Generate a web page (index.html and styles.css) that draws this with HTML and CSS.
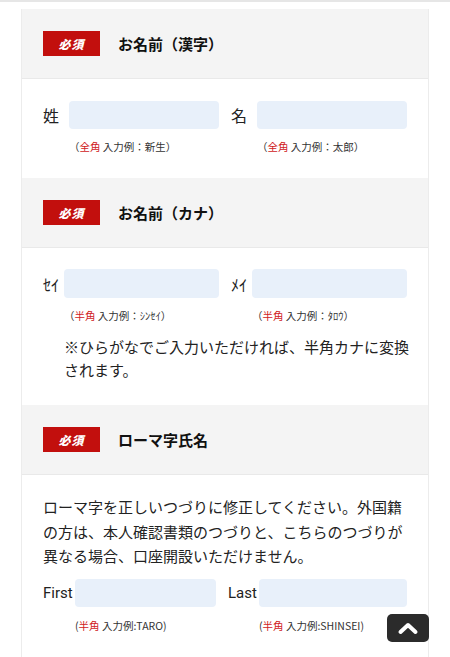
FILE: index.html
```html
<!DOCTYPE html>
<html lang="ja">
<head>
    <meta charset="UTF-8">
    <meta name="viewport" content="width=device-width, initial-scale=1.0">
    <title>お客様情報の入力</title>
    <link rel="stylesheet" href="styles.css">
</head>
<body>
    <div class="form-wrap">

        <!-- お名前（漢字） -->
        <div class="form-section">
            <div class="section-head">
                <span class="required">必須</span>
                <h2 class="section-title">お名前（漢字）</h2>
            </div>
            <div class="section-body body-kanji">
                <div class="name-row">
                    <div class="field">
                        <label class="field-label">姓</label>
                        <input class="field-input" type="text">
                        <p class="hint">（<span class="hint-red">全角</span> 入力例：新生）</p>
                    </div>
                    <div class="field">
                        <label class="field-label">名</label>
                        <input class="field-input" type="text">
                        <p class="hint">（<span class="hint-red">全角</span> 入力例：太郎）</p>
                    </div>
                </div>
            </div>
        </div>

        <!-- お名前（カナ） -->
        <div class="form-section">
            <div class="section-head">
                <span class="required">必須</span>
                <h2 class="section-title">お名前（カナ）</h2>
            </div>
            <div class="section-body body-kana">
                <div class="name-row">
                    <div class="field">
                        <label class="field-label">ｾｲ</label>
                        <input class="field-input" type="text">
                        <p class="hint">（<span class="hint-red">半角</span> 入力例：ｼﾝｾｲ）</p>
                    </div>
                    <div class="field">
                        <label class="field-label">ﾒｲ</label>
                        <input class="field-input" type="text">
                        <p class="hint">（<span class="hint-red">半角</span> 入力例：ﾀﾛｳ）</p>
                    </div>
                </div>
                <p class="kana-note">※ひらがなでご入力いただければ、半角カナに変換されます。</p>
            </div>
        </div>

        <!-- ローマ字氏名 -->
        <div class="form-section">
            <div class="section-head">
                <span class="required">必須</span>
                <h2 class="section-title">ローマ字氏名</h2>
            </div>
            <div class="section-body body-roman">
                <p class="roman-note">ローマ字を正しいつづりに修正してください。外国籍の方は、本人確認書類のつづりと、こちらのつづりが異なる場合、口座開設いただけません。</p>
                <div class="name-row">
                    <div class="field field-first">
                        <label class="field-label">First</label>
                        <input class="field-input" type="text">
                        <p class="hint">(<span class="hint-red">半角</span> 入力例:TARO)</p>
                    </div>
                    <div class="field field-last">
                        <label class="field-label">Last</label>
                        <input class="field-input" type="text">
                        <p class="hint">(<span class="hint-red">半角</span> 入力例:SHINSEI)</p>
                    </div>
                </div>
            </div>
        </div>

    </div>

    <a class="page-top" href="#">
        <svg width="22" height="14" viewBox="0 0 22 14">
            <path d="M3.5 11 L11 4 L18.5 11" fill="none" stroke="#fff" stroke-width="4" stroke-linecap="round" stroke-linejoin="round"/>
        </svg>
    </a>
</body>
</html>
```

FILE: styles.css
```css
* {
    margin: 0;
    padding: 0;
    box-sizing: border-box;
}

body {
    font-family: "Noto Sans CJK JP", "Noto Sans", sans-serif;
    color: #222;
    background: #fff;
    border-top: 2px solid #e6e6e6;
}

.form-wrap {
    padding: 7px 21px 0;
}

.form-section {
    border-left: 1px solid #ececec;
    border-right: 1px solid #ececec;
}

.section-head {
    display: flex;
    align-items: center;
    height: 70px;
    padding-left: 21px;
    background-color: #f4f4f4;
    border-bottom: 1px solid #e9e9e9;
}

.required {
    display: flex;
    align-items: center;
    justify-content: center;
    width: 57px;
    height: 25px;
    background-color: #c20f0d;
    color: #fff;
    font-size: 12px;
    font-weight: 900;
    font-style: italic;
    letter-spacing: 1px;
}

.section-title {
    margin-left: 18px;
    font-size: 15px;
    font-weight: bold;
    color: #111;
}

.section-body {
    padding: 22px 21px 24px;
}

.name-row {
    display: flex;
    gap: 12px;
}

.field {
    flex: 1 1 0;
    min-width: 0;
    display: grid;
    grid-template-columns: 26px minmax(0, 1fr);
    align-items: center;
}

.field-label {
    font-size: 16px;
    color: #222;
}

.field-input {
    width: 100%;
    min-width: 0;
    height: 28px;
    border: none;
    border-radius: 4px;
    background-color: #e8f0fa;
    outline: none;
}

.hint {
    grid-column: 2;
    margin-top: 11px;
    font-size: 10.5px;
    line-height: 14px;
    color: #333;
}

.hint-red {
    color: #d0211c;
}

/* カナ */
.body-kana {
    padding: 21px 21px 24px;
}

.body-kana .field {
    grid-template-columns: 21px minmax(0, 1fr);
}

.body-kana .field-input {
    height: 29px;
}

.kana-note {
    margin: 12px -4px 0 21px;
    font-size: 15px;
    line-height: 23px;
    color: #222;
}

/* ローマ字 */
.body-roman {
    padding-top: 20px;
}

.roman-note {
    font-size: 15px;
    line-height: 24.5px;
    color: #222;
}

.body-roman .name-row {
    margin-top: 10px;
}

.body-roman .hint {
    margin-top: 12px;
}

.body-roman .field-label {
    font-family: Roboto, "Noto Sans", sans-serif;
    font-size: 15px;
}

.field-first {
    flex: 0 0 173px;
    grid-template-columns: 32px minmax(0, 1fr);
}

.field-last {
    grid-template-columns: 31px minmax(0, 1fr);
}

.page-top {
    position: fixed;
    right: 21px;
    bottom: 15px;
    display: flex;
    align-items: center;
    justify-content: center;
    width: 42px;
    height: 28px;
    border-radius: 5px;
    background-color: #2b2b2b;
}
```
